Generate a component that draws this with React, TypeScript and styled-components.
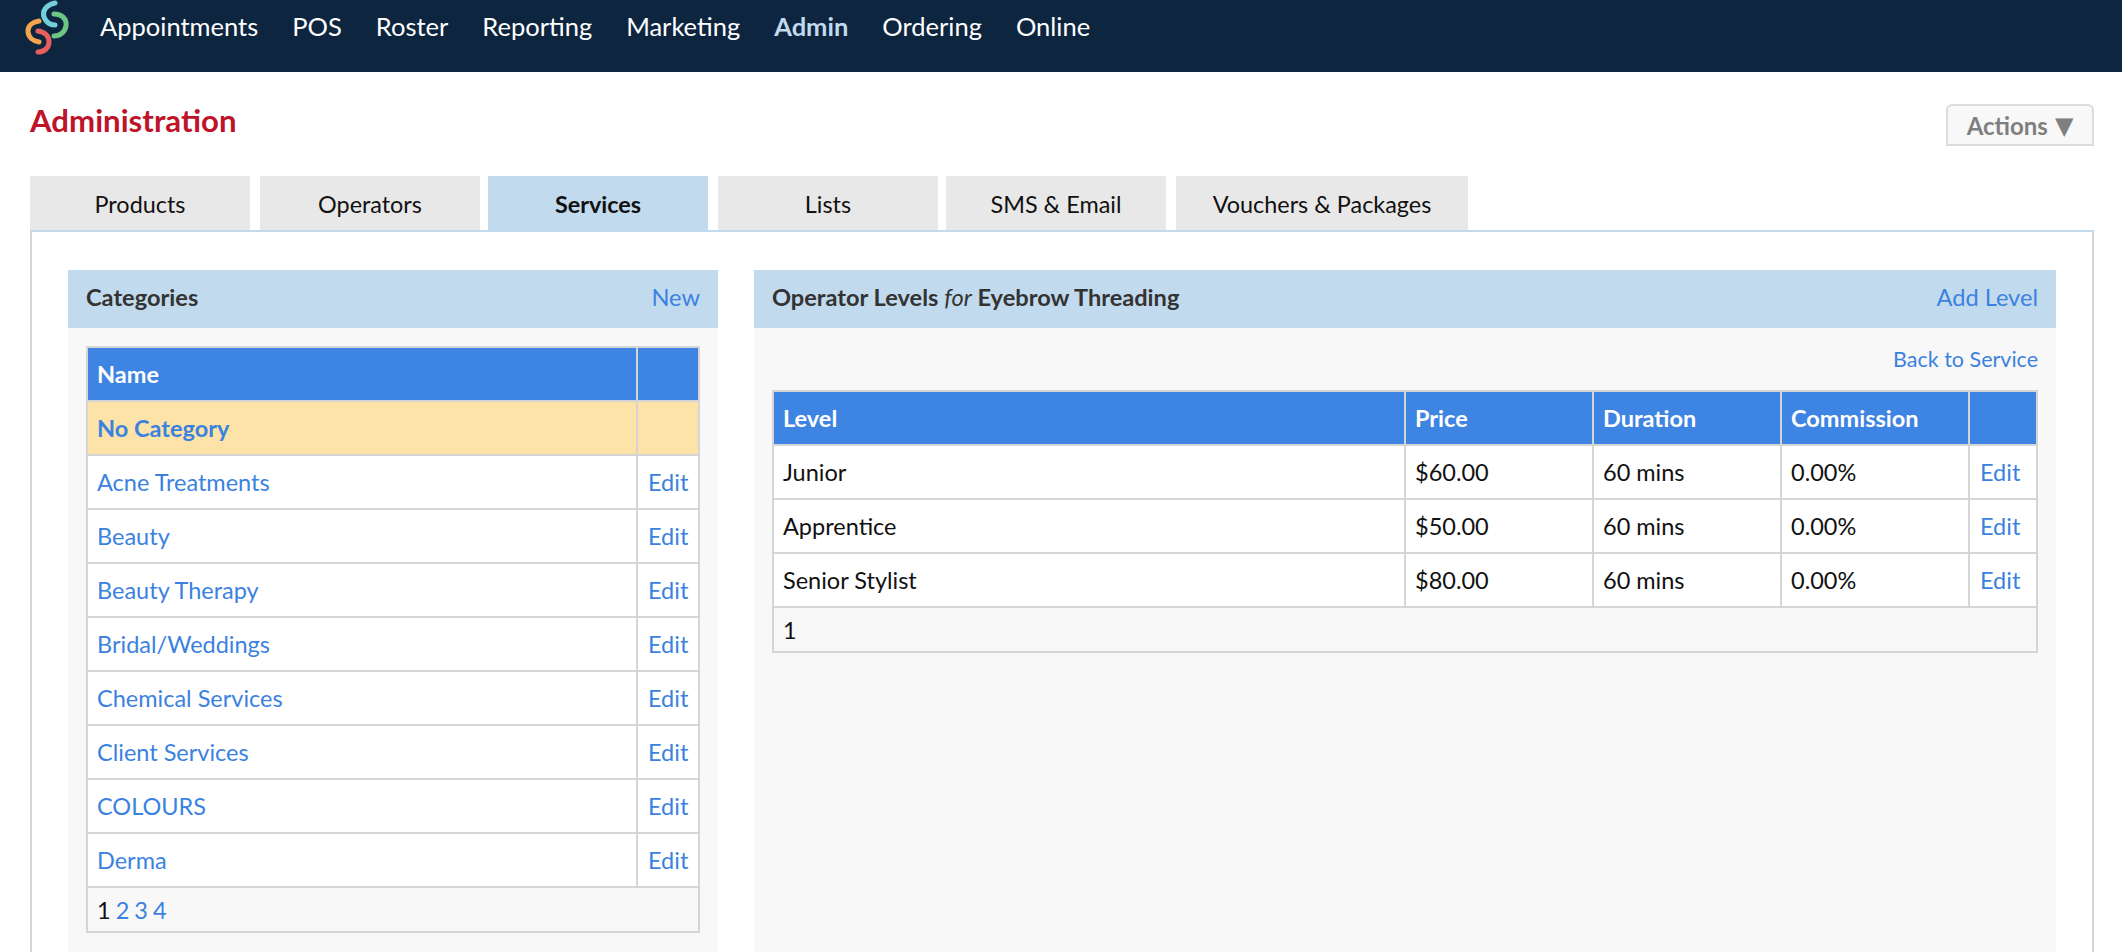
import React from "react";
import styled, { createGlobalStyle } from "styled-components";

const Global = createGlobalStyle`
  html, body { margin: 0; padding: 0; background: #fff; }
  body { font-family: Lato, "Open Sans", sans-serif; font-size: 23.5px; color: #111; overflow: hidden; }
  * { box-sizing: border-box; }
`;

const Page = styled.div`
  height: 952px;
  display: flex;
  flex-direction: column;
  overflow: hidden;
`;
const NavBar = styled.nav`
  height: 72px;
  flex: none;
  background: #0e2540;
  display: flex;
  align-items: flex-start;
  padding-left: 24px;
`;
const Logo = styled.svg`
  width: 48px;
  height: 56px;
  flex: none;
  margin-right: 28px;
`;
const NavLinks = styled.div`
  display: flex;
  gap: 34px;
  padding-top: 11px;
`;
const NavLink = styled.a<{ $active?: boolean }>`
  font-size: 25.5px;
  line-height: 30px;
  color: ${(p) => (p.$active ? "#c2daed" : "#fff")};
  font-weight: ${(p) => (p.$active ? 700 : 400)};
`;
const Main = styled.main`
  flex: 1;
  min-height: 0;
  display: flex;
  flex-direction: column;
  padding: 0 28px 0 30px;
`;
const TitleRow = styled.div`
  display: flex;
  justify-content: space-between;
  align-items: flex-start;
  height: 104px;
  padding-top: 32px;
`;
const Title = styled.h1`
  margin: -3px 0 0;
  font-size: 31.2px;
  line-height: 38px;
  font-weight: 700;
  color: #bd1429;
`;
const ActionsButton = styled.button`
  width: 148px;
  height: 42px;
  display: flex;
  align-items: center;
  justify-content: center;
  gap: 7px;
  background: #f8f8f8;
  border: 2px solid #dcdcdc;
  border-radius: 6px 6px 0 0;
  font: 700 24px Lato, sans-serif;
  color: #7f7f7f;
  padding: 1px 0 0;
`;
const ActionsArrow = styled.span`
  font: 400 24px "DejaVu Sans", sans-serif;
  line-height: 24px;
`;
const Tabs = styled.div`
  display: flex;
  flex: none;
`;
const Tab = styled.div<{ $active?: boolean; $wide?: boolean }>`
  width: ${(p) => (p.$wide ? "292px" : "220px")};
  height: 54px;
  display: flex;
  align-items: center;
  justify-content: center;
  padding-top: 2px;
  margin-right: 10px;
  &:nth-child(even) { margin-right: 8px; }
  background: ${(p) => (p.$active ? "#c2daed" : "#e8e8e8")};
  font-weight: ${(p) => (p.$active ? 700 : 400)};
  font-size: 23.4px;
  color: #111;
`;
const Content = styled.div`
  flex: 1;
  min-height: 0;
  display: flex;
  gap: 36px;
  padding: 38px 36px 0;
  border-top: 2px solid #c2daed;
  border-left: 2px solid #d5d5d5;
  border-right: 2px solid #d5d5d5;
`;
const Panel = styled.section<{ $fill?: boolean }>`
  background: #f8f8f8;
  ${(p) => (p.$fill ? "flex: 1; min-width: 0;" : "flex: none; width: 650px;")}
`;
const PanelHeader = styled.div`
  height: 58px;
  background: #c2daed;
  display: flex;
  align-items: center;
  justify-content: space-between;
  padding: 0 18px 5px;
  font-weight: 700;
  font-size: 23.6px;
  color: #333;
`;
const HeaderFor = styled.em`
  font-weight: 400;
`;
const Link = styled.a`
  color: #3b82e0;
  font-weight: 400;
`;
const PanelBody = styled.div`
  padding: 18px 18px 0;
`;
const BackRow = styled.div`
  display: flex;
  justify-content: flex-end;
  height: 44px;
  font-size: 21.5px;
  line-height: 27px;
`;
const Table = styled.table`
  width: 100%;
  border-collapse: collapse;
  table-layout: fixed;
  background: #fff;
  border: 2px solid #d5d5d5;
`;
const Th = styled.th<{ $w?: number }>`
  ${(p) => (p.$w ? `width: ${p.$w}px;` : "")}
  height: 54px;
  padding: 0 9px;
  background: #3e84e3;
  color: #fff;
  font-size: 23.5px;
  font-weight: 700;
  text-align: left;
  border: 2px solid #d5d5d5;
`;
const Td = styled.td<{ $hi?: boolean }>`
  height: 54px;
  padding: 0 9px;
  border: 2px solid #d5d5d5;
  font-size: 23.5px;
  background: ${(p) => (p.$hi ? "#fde3a7" : "#fff")};
`;
const EditCell = styled(Td)`
  padding: 0 0 0 10px;
`;
const Strong = styled.a`
  color: #3b82e0;
  font-weight: 700;
`;
const Pager = styled.td`
  height: 45px;
  padding: 0 9px;
  background: #f8f8f8;
  border: 2px solid #d5d5d5;
  font-size: 23.5px;
  word-spacing: -1px;
`;

const nav = ["Appointments", "POS", "Roster", "Reporting", "Marketing", "Admin", "Ordering", "Online"];
const tabs = ["Products", "Operators", "Services", "Lists", "SMS & Email", "Vouchers & Packages"];
const cats = ["Acne Treatments", "Beauty", "Beauty Therapy", "Bridal/Weddings", "Chemical Services", "Client Services", "COLOURS", "Derma"];
const levels = [
  ["Junior", "$60.00"],
  ["Apprentice", "$50.00"],
  ["Senior Stylist", "$80.00"],
];

export default function App() {
  return (
    <Page>
      <Global />
      <NavBar>
        <Logo viewBox="24 0 48 56" fill="none" strokeWidth={5} strokeLinecap="round">
          <path d="M55 3 C46 5 42 11 44 17 C46 22 50 25 55 25" stroke="#72cfdc" />
          <path d="M54 14 C62 14 67 19 66 26 C65 32 60 36 54 36" stroke="#6cc485" />
          <path d="M39 21 C32 22 28 26 28 31 C28 37 33 41 39 42" stroke="#f3a54d" />
          <path d="M38 31 C45 32 49 36 49 42 C49 48 44 52 38 52" stroke="#e85d5d" />
        </Logo>
        <NavLinks>
          {nav.map((n) => (
            <NavLink key={n} $active={n === "Admin"}>{n}</NavLink>
          ))}
        </NavLinks>
      </NavBar>
      <Main>
        <TitleRow>
          <Title>Administration</Title>
          <ActionsButton>Actions <ActionsArrow>▼</ActionsArrow></ActionsButton>
        </TitleRow>
        <Tabs>
          {tabs.map((t, i) => (
            <Tab key={t} $active={t === "Services"} $wide={i === 5}>{t}</Tab>
          ))}
        </Tabs>
        <Content>
          <Panel>
            <PanelHeader>
              <span>Categories</span>
              <Link>New</Link>
            </PanelHeader>
            <PanelBody>
              <Table>
                <thead>
                  <tr><Th>Name</Th><Th $w={62} /></tr>
                </thead>
                <tbody>
                  <tr><Td $hi><Strong>No Category</Strong></Td><Td $hi /></tr>
                  {cats.map((c) => (
                    <tr key={c}>
                      <Td><Link>{c}</Link></Td>
                      <EditCell><Link>Edit</Link></EditCell>
                    </tr>
                  ))}
                  <tr>
                    <Pager colSpan={2}>1 <Link>2</Link> <Link>3</Link> <Link>4</Link></Pager>
                  </tr>
                </tbody>
              </Table>
            </PanelBody>
          </Panel>
          <Panel $fill>
            <PanelHeader>
              <span>Operator Levels <HeaderFor>for</HeaderFor> Eyebrow Threading</span>
              <Link>Add Level</Link>
            </PanelHeader>
            <PanelBody>
              <BackRow><Link>Back to Service</Link></BackRow>
              <Table>
                <thead>
                  <tr>
                    <Th>Level</Th>
                    <Th $w={188}>Price</Th>
                    <Th $w={188}>Duration</Th>
                    <Th $w={188}>Commission</Th>
                    <Th $w={68} />
                  </tr>
                </thead>
                <tbody>
                  {levels.map(([l, p]) => (
                    <tr key={l}>
                      <Td>{l}</Td>
                      <Td>{p}</Td>
                      <Td>60 mins</Td>
                      <Td>0.00%</Td>
                      <EditCell><Link>Edit</Link></EditCell>
                    </tr>
                  ))}
                  <tr><Pager colSpan={5}>1</Pager></tr>
                </tbody>
              </Table>
            </PanelBody>
          </Panel>
        </Content>
      </Main>
    </Page>
  );
}
